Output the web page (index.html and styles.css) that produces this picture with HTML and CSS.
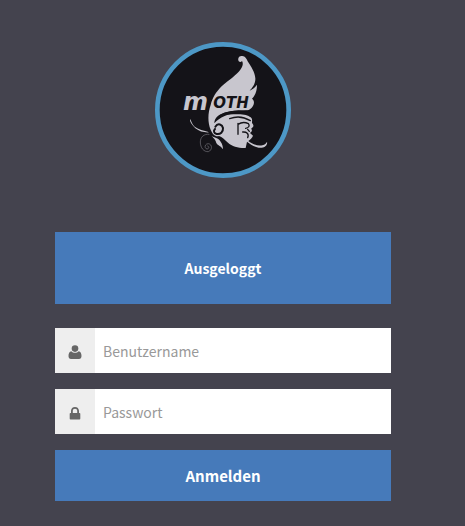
FILE: index.html
```html
<!DOCTYPE html>
<html lang="de">
<head>
<meta charset="utf-8">
<meta name="viewport" content="width=device-width, initial-scale=1">
<title>Anmelden</title>
<link rel="stylesheet" href="styles.css">
</head>
<body>
<main class="login">
  <svg class="logo" viewBox="18 18 408 408" role="img" aria-label="Moth">
    <circle class="logo-disc" cx="222" cy="222" r="197"/>
    <!-- wing and head -->
    <path class="logo-light" d="M268 73C266 64 272 59 280 60C289 61 292 67 296 76C306 91 318 109 319 127C320 143 310 156 302 164C311 160 318 154 324 146C324 163 320 177 309 188C319 195 316 210 303 220C294 226 283 225 270 224C247 223 224 228 209 240C223 237 242 234 260 235C283 234 297 238 305 244C311 249 309 254 309 261C315 268 315 273 307 277L309 285L303 291L312 299C310 306 303 310 298 315C309 324 326 331 340 328C348 326 351 322 354 317C356 326 349 334 338 335C320 337 306 326 294 317L290 336C270 337 249 331 237 320C226 311 220 302 210 300C199 303 190 294 185 281C175 257 177 230 185 207C190 185 202 167 218 151C239 132 263 118 275 100C282 89 283 81 279 75C276 80 269 79 268 73Z"/>
    <!-- facial lines -->
    <path class="logo-dark" d="M196 262C196 243 214 232 235 228C254 223 280 222 302 224C274 228 246 231 227 240C213 246 205 252 196 262Z"/>
    <path class="logo-line" d="M199 272C207 259 220 266 222 276C223 288 214 296 203 294C195 292 192 285 198 279"/>
    <path class="logo-line-fine" d="M242 248C262 240 286 243 304 254M267 262V295M267 265C278 258 288 258 298 263M298 263C303 269 300 275 290 277M281 288C293 287 301 293 296 305M296 280L301 286"/>
    <!-- antennae -->
    <path class="logo-light" d="M124 249C120 256 130 267 139 277C151 287 166 290 181 289C164 283 148 281 137 272C130 266 127 256 124 249ZM188 300C199 306 209 306 215 317C220 324 222 332 222 340C216 329 207 330 202 321C200 312 195 307 188 300Z"/>
    <path class="logo-curl" d="M180 295C165 293 154 303 154 318C154 336 165 348 178 347C190 343 191 325 178 323C167 323 165 337 174 339C181 338 181 331 176 330"/>
    <text class="logo-m" x="102" y="222">m</text>
    <text class="logo-oth" x="193" y="217">OTH</text>
  </svg>

  <p class="notice" role="status">Ausgeloggt</p>

  <form class="form">
    <div class="field">
      <label class="field-icon" for="user" aria-label="Benutzername">
        <svg class="icon" viewBox="0 0 14 14" aria-hidden="true">
          <circle cx="7" cy="3.6" r="3.3"/>
          <path d="M3.3 6.2C1.4 6.4.5 8.4.5 11C.5 12.8 1.5 14 3 14H11C12.5 14 13.5 12.8 13.5 11C13.5 8.4 12.6 6.4 10.7 6.2C8.7 8.3 5.3 8.3 3.3 6.2Z"/>
        </svg>
      </label>
      <input class="field-input" id="user" type="text" placeholder="Benutzername" autocomplete="username">
    </div>
    <div class="field">
      <label class="field-icon" for="password" aria-label="Passwort">
        <svg class="icon" viewBox="0 0 14 14" aria-hidden="true">
          <path fill-rule="evenodd" d="M3 7V5C3 2.5 4.7.9 7 .9S11 2.5 11 5V7H11.5Q12.3 7 12.3 7.8V12.6Q12.3 13.5 11.5 13.5H2.5Q1.7 13.5 1.7 12.6V7.8Q1.7 7 2.5 7ZM4.8 7H9.2V5C9.2 3.6 8.3 2.7 7 2.7S4.8 3.6 4.8 5Z"/>
        </svg>
      </label>
      <input class="field-input" id="password" type="password" placeholder="Passwort" autocomplete="current-password">
    </div>
    <button class="submit" type="submit">Anmelden</button>
  </form>
</main>
</body>
</html>
```
FILE: styles.css
```css
* {
  box-sizing: border-box;
}

body {
  margin: 0;
  background: #44434e;
  font-family: "Noto Sans CJK SC", "Noto Sans", sans-serif;
  font-size: 14px;
  line-height: 24px;
}

.login {
  display: flex;
  flex-direction: column;
  padding: 42px 74px 24px 55px;
}

.logo {
  align-self: center;
  width: 136px;
  height: 136px;
  margin-bottom: 54px;
}

.logo-disc {
  fill: #141318;
  stroke: #4d98c6;
  stroke-width: 14;
}

.logo-light {
  fill: #c8c6ce;
}

.logo-dark {
  fill: #141318;
}

.logo-line,
.logo-line-fine,
.logo-curl {
  fill: none;
  stroke: #141318;
  stroke-linecap: round;
}

.logo-line {
  stroke-width: 6;
}

.logo-line-fine {
  stroke-width: 4;
}

.logo-curl {
  stroke: #77757d;
  stroke-width: 2;
}

.logo-m,
.logo-oth {
  font-family: "DejaVu Sans", sans-serif;
  font-weight: 700;
  font-style: italic;
}

.logo-m {
  fill: #c8c6ce;
  font-size: 72px;
}

.logo-oth {
  fill: #141318;
  font-size: 45px;
}

.notice {
  margin: 0 0 24px;
  padding: 24px;
  background: #467aba;
  color: #fff;
  font-weight: 700;
  text-align: center;
}

.form {
  display: flex;
  flex-direction: column;
  gap: 16px;
}

.field {
  display: flex;
  height: 45px;
  background: #fff;
}

.field-icon {
  display: flex;
  flex: none;
  align-items: center;
  justify-content: center;
  width: 40px;
  padding-top: 3px;
  background: #eee;
}

.icon {
  width: 14px;
  height: 14px;
  fill: #666;
}

.field-input {
  flex: 1;
  min-width: 0;
  padding: 0 8px;
  border: 0;
  background: transparent;
  color: #444;
  font: inherit;
}

.field-input::placeholder {
  color: #999;
  opacity: 1;
}

.submit {
  height: 51px;
  padding: 0;
  border: 0;
  background: #467aba;
  color: #fff;
  font: inherit;
  font-weight: 700;
  font-size: 15px;
}
```
